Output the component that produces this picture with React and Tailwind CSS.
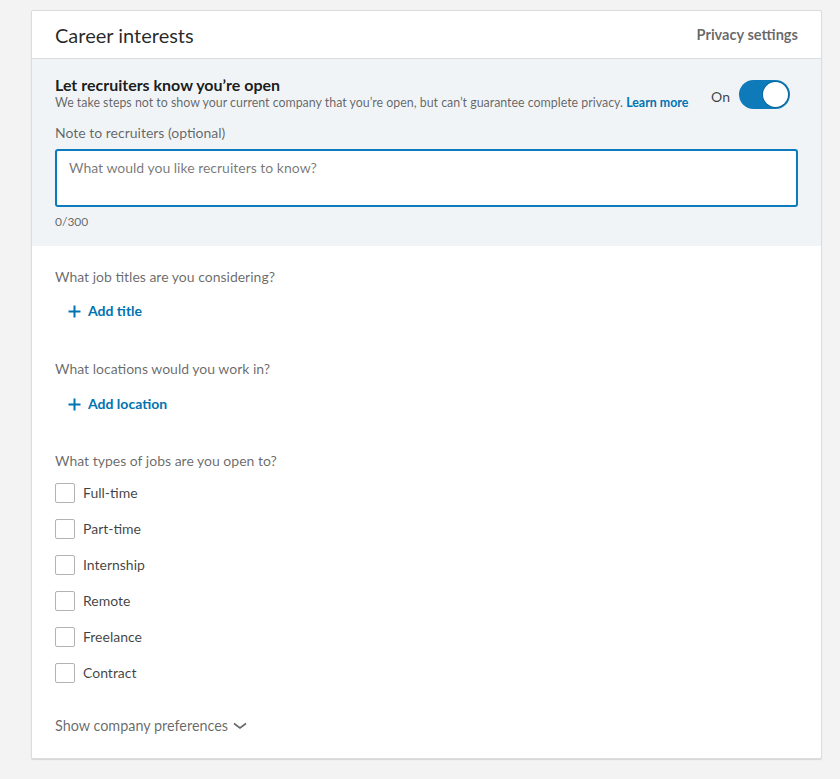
import React, { useState } from 'react';

const jobTypes = ['Full-time', 'Part-time', 'Internship', 'Remote', 'Freelance', 'Contract'];

const PlusIcon = () => (
    <svg width="13" height="13" viewBox="0 0 13 13" className="shrink-0">
        <path d="M6.5 0.5v12M0.5 6.5h12" stroke="currentColor" strokeWidth="2" fill="none" />
    </svg>
);

const App = () => {
    const [open, setOpen] = useState(true);
    const [note, setNote] = useState('');
    const [checked, setChecked] = useState({});

    return (
        <div className="min-h-[779px] bg-[#f3f3f3] pt-[10px] pl-[31px] pr-[18px] pb-[20px] font-['Lato','Open_Sans',sans-serif] text-[rgba(0,0,0,0.9)]">
            <div className="bg-white border border-[#dcdcdc] rounded-[2px] shadow-[0_1px_1px_rgba(0,0,0,0.12)]">
                {/* Header */}
                <div className="h-[48px] flex items-center justify-between px-[23px] border-b border-[#dcdcdc]">
                    <h2 className="text-[20px] leading-[24px] font-normal text-[rgba(0,0,0,0.85)]">Career interests</h2>
                    <button className="text-[14.6px] font-bold text-[rgba(0,0,0,0.6)]">Privacy settings</button>
                </div>

                {/* Open to recruiters */}
                <div className="bg-[#f0f4f7] px-[23px] pt-[16px] pb-[16px]">
                    <div className="flex items-start justify-between">
                        <div>
                            <h3 className="text-[16px] leading-[20px] font-bold">Let recruiters know you’re open</h3>
                            <p className="text-[12.4px] leading-[16px] text-[rgba(0,0,0,0.6)]">
                                We take steps not to show your current company that you’re open, but can’t guarantee complete privacy.{' '}
                                <a className="font-bold text-[#0073b1]">Learn more</a>
                            </p>
                        </div>
                        <div className="flex items-center gap-[9px] mt-[5px] mr-[8px]">
                            <span className="text-[14px] mt-[4px] text-[rgba(0,0,0,0.75)]">On</span>
                            <button
                                onClick={() => setOpen(!open)}
                                className={`w-[51px] h-[29px] rounded-full flex items-center px-[2px] ${open ? 'bg-[#0e7ab9] justify-end' : 'bg-[#aaa] justify-start'}`}
                            >
                                <span className="w-[25px] h-[25px] rounded-full bg-white shadow-[0_0_0_1px_rgba(0,0,0,0.15)]" />
                            </button>
                        </div>
                    </div>

                    <label className="block mt-[12px] text-[14px] leading-[20px] text-[rgba(0,0,0,0.6)]">Note to recruiters (optional)</label>
                    <textarea
                        autoFocus
                        value={note}
                        onChange={(e) => setNote(e.target.value)}
                        placeholder="What would you like recruiters to know?"
                        className="block mt-[6px] w-full h-[58px] resize-none bg-white border-2 border-[#0b7bbd] rounded-[3px] px-[12px] py-[7px] text-[14px] leading-[20px] outline-none caret-black placeholder:text-[rgba(0,0,0,0.55)]"
                    />
                    <p className="mt-[7px] text-[12px] leading-[16px] text-[rgba(0,0,0,0.6)]">{note.length}/300</p>
                </div>

                {/* Preferences */}
                <div className="px-[23px] pt-[21px] pb-[22px] text-[14px] leading-[20px]">
                    <p className="text-[rgba(0,0,0,0.6)]">What job titles are you considering?</p>
                    <button className="mt-[14px] ml-[13px] flex items-center gap-[7px] font-bold text-[#0073b1]">
                        <PlusIcon />
                        <span>Add title</span>
                    </button>

                    <p className="mt-[38px] text-[rgba(0,0,0,0.6)]">What locations would you work in?</p>
                    <button className="mt-[15px] ml-[13px] flex items-center gap-[7px] font-bold text-[#0073b1]">
                        <PlusIcon />
                        <span>Add location</span>
                    </button>

                    <p className="mt-[37px] text-[rgba(0,0,0,0.6)]">What types of jobs are you open to?</p>
                    <div className="mt-[12px] flex flex-col gap-[16px]">
                        {jobTypes.map((type) => (
                            <label key={type} className="flex items-center gap-[8px] h-[20px] cursor-pointer">
                                <span
                                    onClick={() => setChecked((prev) => ({ ...prev, [type]: !prev[type] }))}
                                    className={`w-[20px] h-[20px] rounded-[2px] border ${checked[type] ? 'bg-[#0073b1] border-[#0073b1]' : 'bg-white border-[#b3b3b3]'}`}
                                />
                                <span className="text-[rgba(0,0,0,0.75)]">{type}</span>
                            </label>
                        ))}
                    </div>

                    <button className="mt-[33px] flex items-center gap-[5px] text-[14.4px] text-[rgba(0,0,0,0.6)]">
                        <span>Show company preferences</span>
                        <svg width="14" height="8" viewBox="0 0 14 8">
                            <path d="M1 1.5l6 4.5 6-4.5" stroke="currentColor" strokeWidth="1.6" fill="none" />
                        </svg>
                    </button>
                </div>
            </div>
        </div>
    );
};

export default App;
